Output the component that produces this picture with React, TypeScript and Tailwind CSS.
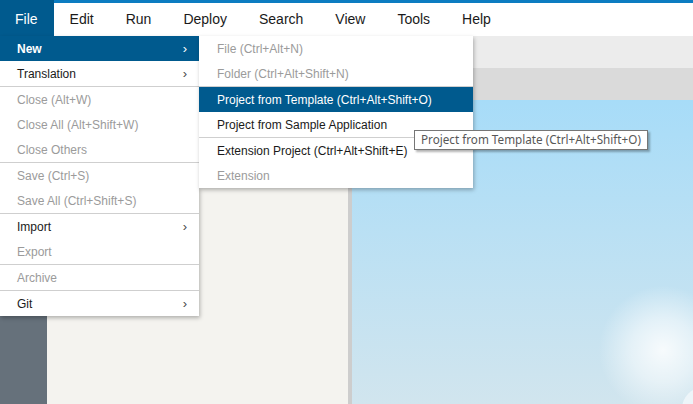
import React from 'react'

const TOP_MENU = ['File', 'Edit', 'Run', 'Deploy', 'Search', 'View', 'Tools', 'Help']

type Item =
  | { label: string; disabled?: boolean; sub?: boolean; active?: boolean }
  | { sep: true }

const FILE_MENU: Item[] = [
  { label: 'New', sub: true, active: true },
  { label: 'Translation', sub: true },
  { sep: true },
  { label: 'Close (Alt+W)', disabled: true },
  { label: 'Close All (Alt+Shift+W)', disabled: true },
  { label: 'Close Others', disabled: true },
  { sep: true },
  { label: 'Save (Ctrl+S)', disabled: true },
  { label: 'Save All (Ctrl+Shift+S)', disabled: true },
  { sep: true },
  { label: 'Import', sub: true },
  { label: 'Export', disabled: true },
  { sep: true },
  { label: 'Archive', disabled: true },
  { sep: true },
  { label: 'Git', sub: true },
]

const NEW_MENU: Item[] = [
  { label: 'File (Ctrl+Alt+N)', disabled: true },
  { label: 'Folder (Ctrl+Alt+Shift+N)', disabled: true },
  { sep: true },
  { label: 'Project from Template (Ctrl+Alt+Shift+O)', active: true },
  { label: 'Project from Sample Application' },
  { sep: true },
  { label: 'Extension Project (Ctrl+Alt+Shift+E)' },
  { label: 'Extension', disabled: true },
]

function MenuList({ items, bold, indent }: { items: Item[]; bold?: boolean; indent: string }) {
  return (
    <>
      {items.map((it, i) => {
        if ('sep' in it) return <div key={i} className="h-px bg-[#cfcfcf]" />
        const cls = it.active
          ? `bg-[#005a8e] text-white ${bold ? 'font-bold' : ''}`
          : it.disabled
            ? 'text-[#9b9b9b]'
            : 'text-[#1a1a1a]'
        return (
          <div key={i} className={`flex items-center h-[25px] ${indent} pr-[12px] text-[12px] ${cls}`}>
            <span className="flex-1 whitespace-nowrap">{it.label}</span>
            {it.sub && (
              <span className={`text-[13px] leading-none font-normal ${it.active ? 'text-white' : 'text-[#4a4a4a]'}`}>›</span>
            )}
          </div>
        )
      })}
    </>
  )
}

export default function App() {
  return (
    <div className="relative w-[693px] h-[404px] overflow-hidden flex flex-col bg-white font-['Liberation_Sans',Arial,sans-serif]">
      {/* Menu bar */}
      <div className="flex h-[36px] shrink-0 bg-white">
        {TOP_MENU.map((m, i) => (
          <div
            key={m}
            className={`flex items-center px-4 border-t-[3px] text-[14px] ${
              i === 0
                ? 'bg-[#005a8e] border-[#005a8e] text-white pl-[15px]'
                : 'border-[#0c7cc1] text-[#1a1a1a]'
            }`}
          >
            {m}
          </div>
        ))}
        <div className="flex-1 border-t-[3px] border-[#0c7cc1]" />
      </div>

      {/* Workspace */}
      <div className="flex flex-1">
        <div className="w-[47px] bg-[#66717b]" />
        <div className="w-[301px] bg-[#f4f3ef]" />
        <div className="w-[4px] bg-[#cdcdcd]" />
        <div className="flex-1 flex flex-col">
          <div className="h-[32px] bg-[#ececec]" />
          <div className="h-[32px] bg-[#dadada]" />
          <div className="relative flex-1 overflow-hidden bg-linear-to-b from-[#a7dcf8] to-[#d1e5ee]">
            <div className="absolute left-[246px] top-[185px] w-[130px] h-[130px] rounded-full bg-[radial-gradient(circle,rgba(255,255,255,0.85)_0%,rgba(255,255,255,0.5)_35%,rgba(255,255,255,0)_70%)]" />
            <div className="absolute left-[330px] top-[287px] w-[44px] h-[44px] rounded-full bg-[#f3f8fb]/80" />
          </div>
        </div>
      </div>

      {/* File menu */}
      <div className="absolute left-0 top-[36px] w-[199px] bg-white shadow-[1px_2px_4px_rgba(0,0,0,0.28)]">
        <MenuList items={FILE_MENU} bold indent="pl-[17px]" />
      </div>

      {/* New submenu */}
      <div className="absolute left-[199px] top-[36px] w-[274px] bg-white shadow-[1px_2px_4px_rgba(0,0,0,0.28)]">
        <MenuList items={NEW_MENU} indent="pl-[18px]" />
      </div>

      {/* Tooltip */}
      <div className="absolute left-[414px] top-[130px] h-[20px] w-[234px] flex items-center pl-[6px] bg-white border border-[#767676] text-[#575757] text-[11.7px] font-['Noto_Sans',sans-serif] whitespace-nowrap shadow-[2px_2px_2px_rgba(0,0,0,0.3)]">
        Project from Template (Ctrl+Alt+Shift+O)
      </div>
    </div>
  )
}
